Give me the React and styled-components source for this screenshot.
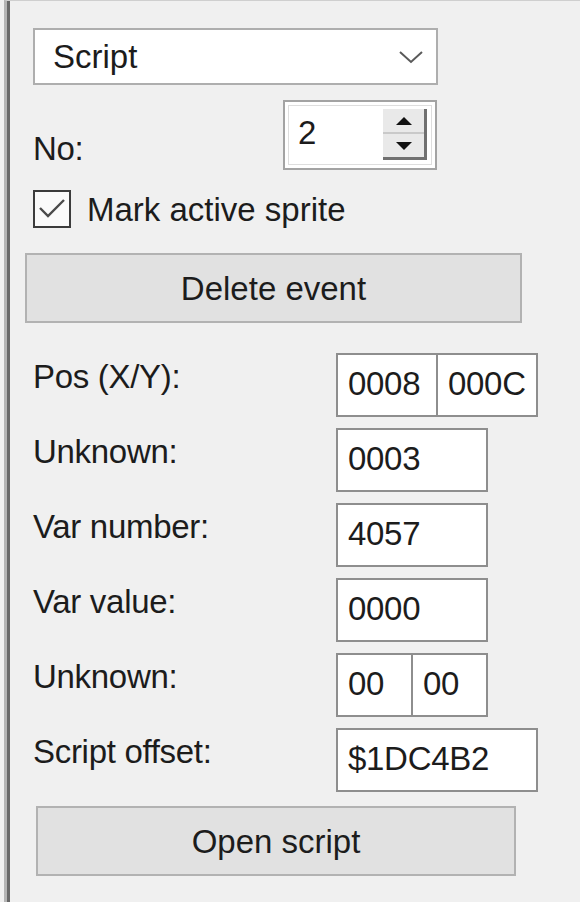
import { Fragment } from "react";
import styled, { createGlobalStyle } from "styled-components";

const GlobalStyle = createGlobalStyle`
  html, body {
    margin: 0;
    background: #f0f0f0;
  }
  body {
    font-family: "Liberation Sans", Arial, sans-serif;
  }
`;

const Frame = styled.div`
  margin-left: 4px;
  border-left: 3px solid #b4b4b4;
  border-top: 1px solid #cfcfcf;
  min-height: 902px;
  box-sizing: border-box;
`;

const Panel = styled.div`
  border-left: 3px solid #686868;
  min-height: 901px;
  box-sizing: border-box;
  padding: 27px 0 0 23px;
  display: flex;
  flex-direction: column;
  align-items: flex-start;
  color: #1c1c1c;
  font-size: 33px;
  line-height: 1;
`;

const Combo = styled.div`
  width: 405px;
  height: 57px;
  box-sizing: border-box;
  border: 2px solid #aeaeae;
  background: #fff;
  display: flex;
  align-items: center;
  justify-content: space-between;
  padding: 0 12px 0 18px;
`;

const NoRow = styled.div`
  margin-top: 15px;
  display: flex;
  align-items: flex-start;
`;

const Label = styled.div`
  width: ${(p) => p.$width}px;
  padding-top: ${(p) => p.$top}px;
  letter-spacing: -0.3px;
`;

const Spin = styled.div`
  width: 154px;
  height: 70px;
  box-sizing: border-box;
  border: 2px solid #a3a3a3;
  box-shadow: inset 0 0 0 3px #fff, inset 0 0 0 4px #dedede;
  background: #fff;
  display: flex;
  align-items: flex-start;
`;

const SpinValue = styled.span`
  padding: 14px 0 0 13px;
`;

const SpinButtons = styled.div`
  margin: 7px 8px 0 auto;
  width: 44px;
  height: 51px;
  box-sizing: border-box;
  background: #e9e9e9;
  border-right: 3px solid #707070;
  border-bottom: 3px solid #707070;
  display: flex;
  flex-direction: column;
`;

const SpinHalf = styled.div`
  flex: 1;
  display: flex;
  align-items: center;
  justify-content: center;
  border-bottom: ${(p) => (p.$top ? "2px solid #c9c9c9" : "none")};
`;

const CheckRow = styled.label`
  margin-top: 20px;
  display: flex;
  align-items: center;
  gap: 16px;
`;

const CheckBox = styled.span`
  width: 38px;
  height: 38px;
  box-sizing: border-box;
  border: 2px solid #3c3c3c;
  background: #fafafa;
  display: flex;
  align-items: center;
  justify-content: center;
`;

const Button = styled.button`
  margin-top: ${(p) => p.$top}px;
  margin-left: ${(p) => p.$left}px;
  width: ${(p) => p.$width}px;
  height: 70px;
  box-sizing: border-box;
  border: 2px solid #b2b2b2;
  background: #e1e1e1;
  color: #1c1c1c;
  font-family: "Liberation Sans", Arial, sans-serif;
  font-size: 33px;
  line-height: 1;
  padding: 0;
`;

const Fields = styled.div`
  margin-top: 30px;
  display: grid;
  grid-template-columns: 303px auto;
  grid-auto-rows: 64px;
  row-gap: 11px;
`;

const Group = styled.div`
  display: flex;
`;

const Cell = styled.div`
  width: ${(p) => p.$width}px;
  height: 64px;
  box-sizing: border-box;
  border: 2px solid #8e8e8e;
  background: #fff;
  padding: 12px 0 0 10px;
  white-space: nowrap;
  letter-spacing: -0.3px;
  & + & {
    margin-left: -2px;
  }
`;

const Chevron = () => (
  <svg width="26" height="16" viewBox="0 0 26 16">
    <path d="M2 3 L13 13 L24 3" fill="none" stroke="#5a5a5a" strokeWidth="2" />
  </svg>
);

const Arrow = ({ down }) => (
  <svg width="18" height="10" viewBox="0 0 18 10">
    <path d={down ? "M1 1 L17 1 L9 9 Z" : "M1 9 L17 9 L9 1 Z"} fill="#111" />
  </svg>
);

const Tick = () => (
  <svg width="30" height="26" viewBox="0 0 30 26">
    <path d="M3 12 L11 20 L27 4" fill="none" stroke="#4a4a4a" strokeWidth="2.4" />
  </svg>
);

const fields = [
  { label: "Pos (X/Y):", cells: [["0008", 102], ["000C", 102]] },
  { label: "Unknown:", cells: [["0003", 152]] },
  { label: "Var number:", cells: [["4057", 152]] },
  { label: "Var value:", cells: [["0000", 152]] },
  { label: "Unknown:", cells: [["00", 77], ["00", 77]] },
  { label: "Script offset:", cells: [["$1DC4B2", 202]] },
];

const App = () => {
  return (
    <>
      <GlobalStyle />
      <Frame>
        <Panel>
          <Combo>
            <span>Script</span>
            <Chevron />
          </Combo>
          <NoRow>
            <Label $width={250} $top={32}>
              No:
            </Label>
            <Spin>
              <SpinValue>2</SpinValue>
              <SpinButtons>
                <SpinHalf $top>
                  <Arrow />
                </SpinHalf>
                <SpinHalf>
                  <Arrow down />
                </SpinHalf>
              </SpinButtons>
            </Spin>
          </NoRow>
          <CheckRow>
            <CheckBox>
              <Tick />
            </CheckBox>
            <span>Mark active sprite</span>
          </CheckRow>
          <Button type="button" $top={25} $left={-8} $width={497}>
            Delete event
          </Button>
          <Fields>
            {fields.map((f, i) => (
              <Fragment key={i}>
                <Label $top={7}>{f.label}</Label>
                <Group>
                  {f.cells.map(([v, w], j) => (
                    <Cell key={j} $width={w}>
                      {v}
                    </Cell>
                  ))}
                </Group>
              </Fragment>
            ))}
          </Fields>
          <Button type="button" $top={14} $left={3} $width={480}>
            Open script
          </Button>
        </Panel>
      </Frame>
    </>
  );
};

export default App;
